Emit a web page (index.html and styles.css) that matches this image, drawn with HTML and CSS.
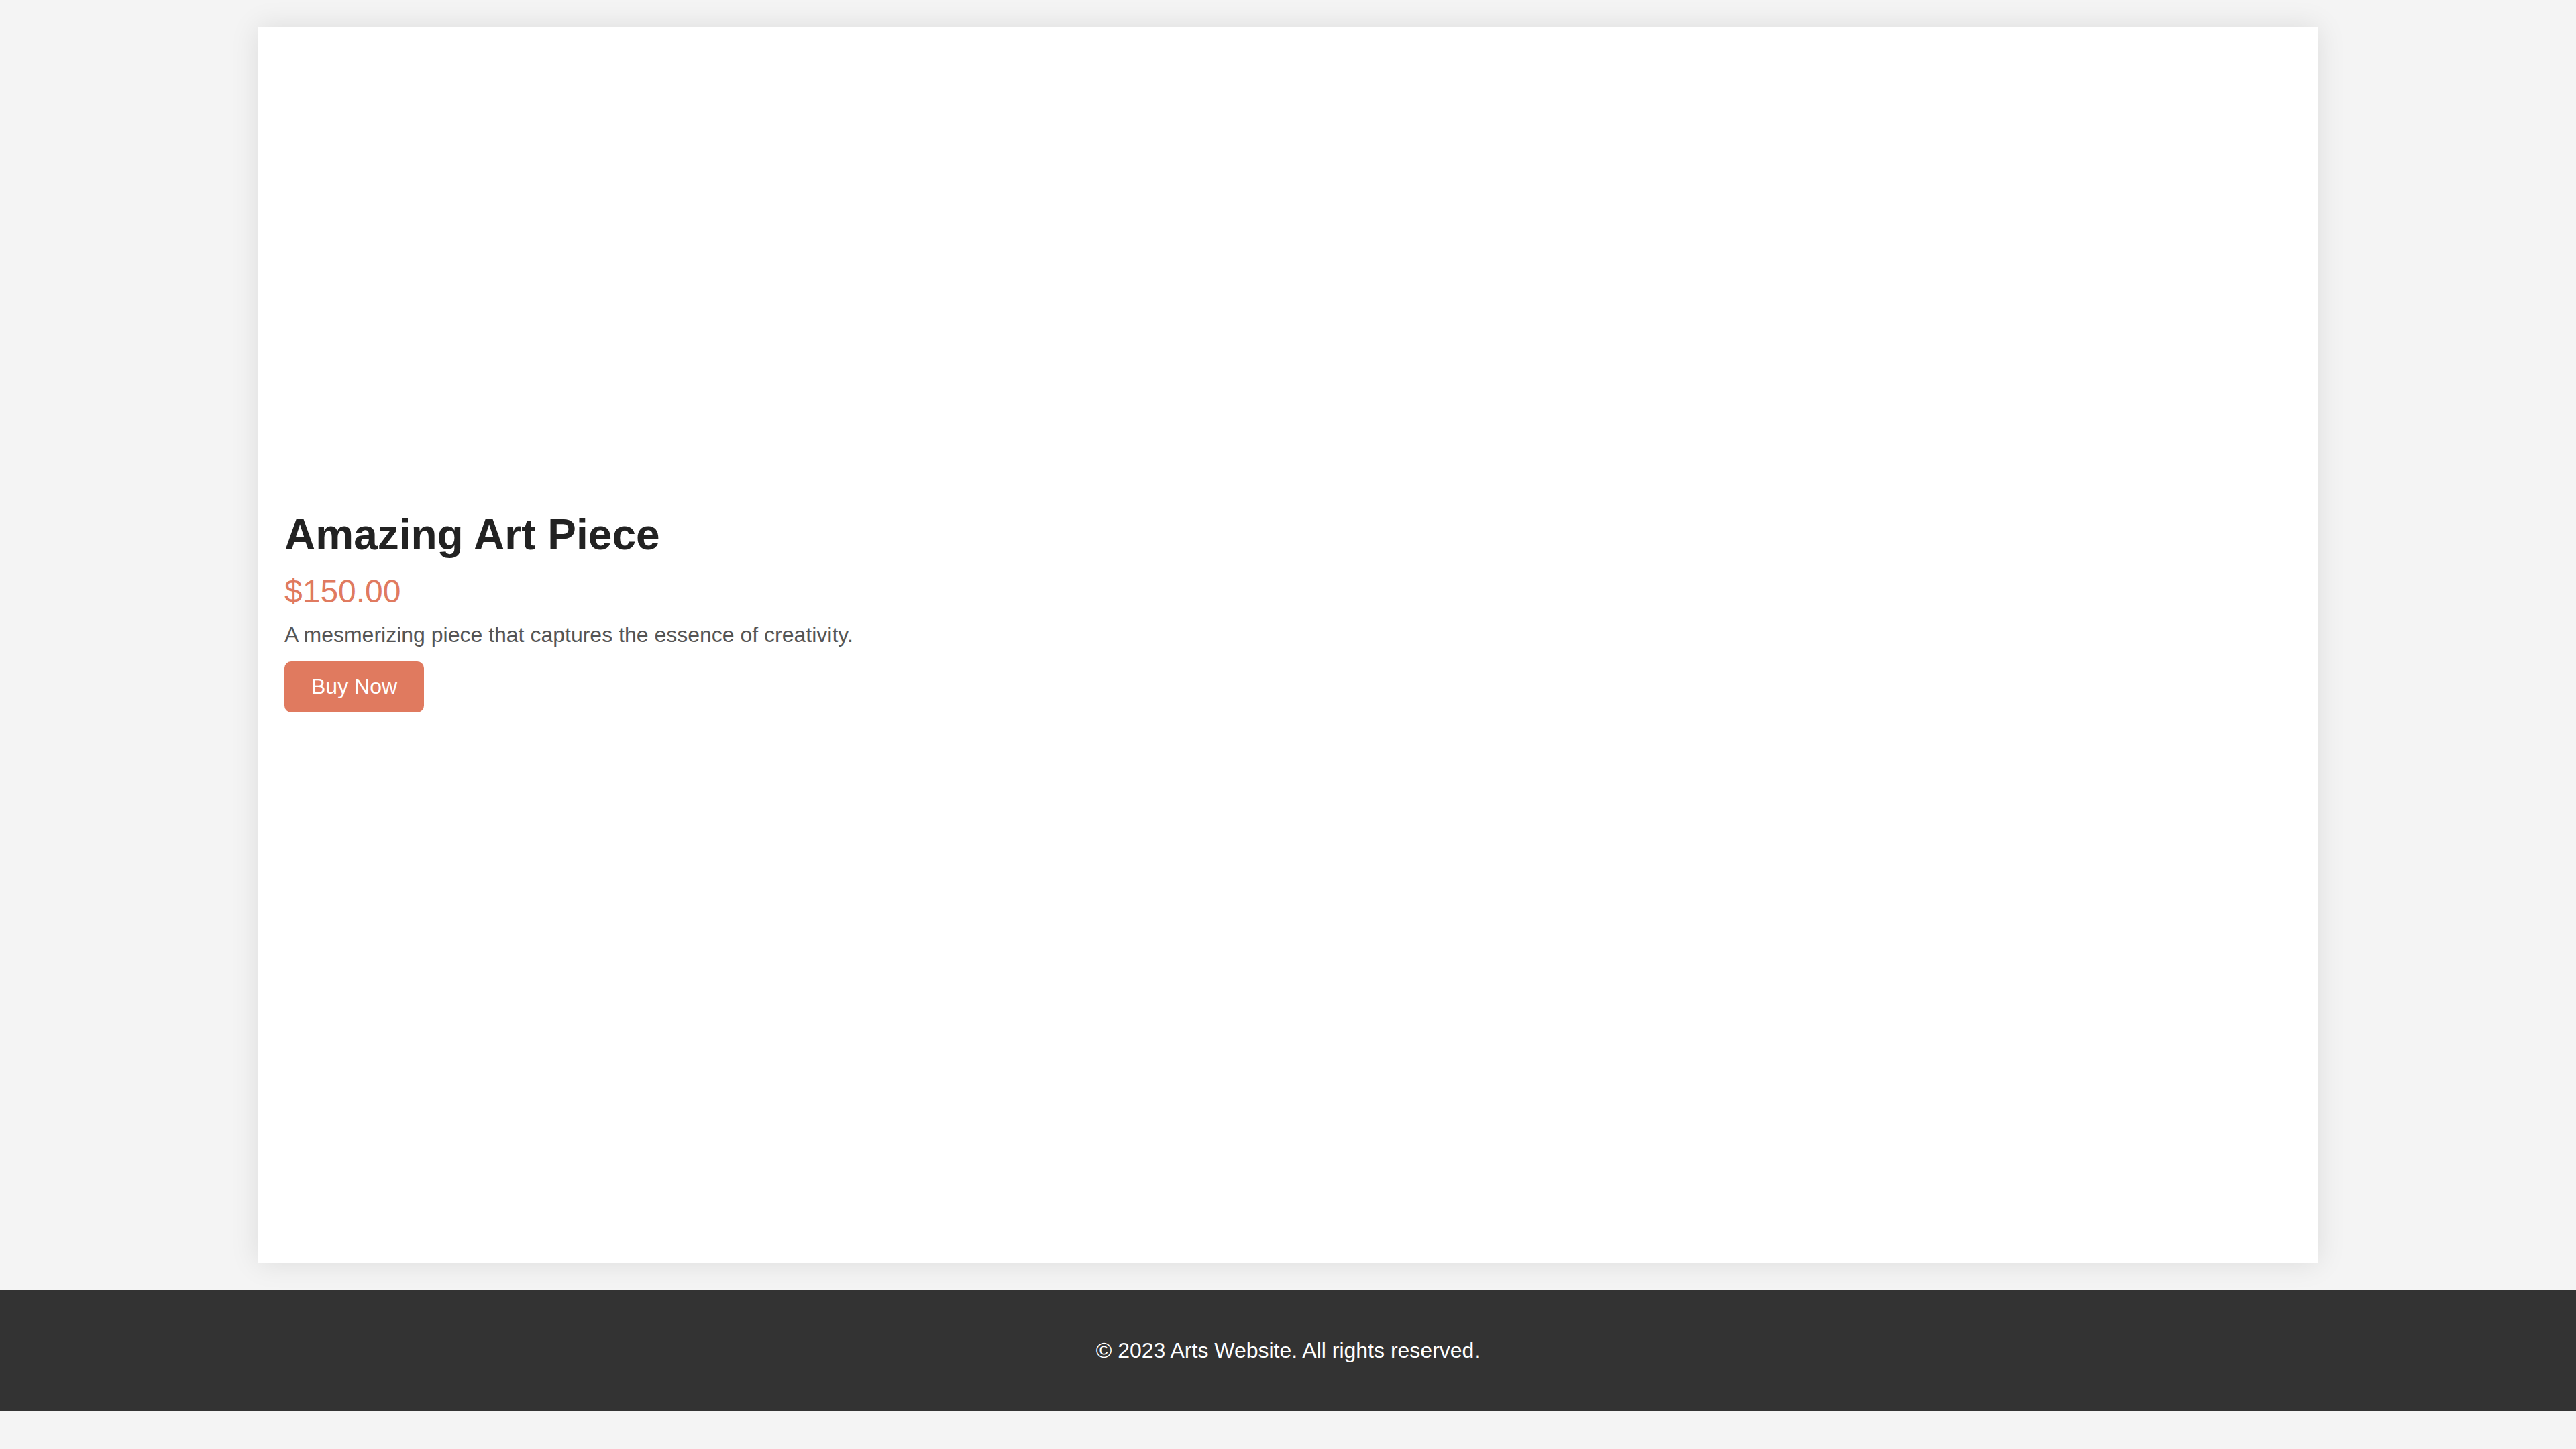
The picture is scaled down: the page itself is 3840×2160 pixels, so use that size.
FILE: index.html
```html
<!DOCTYPE html>
<html lang="en">
<head>
<meta charset="utf-8">
<title>Arts Website</title>
<link rel="stylesheet" href="styles.css">
</head>
<body>
<main class="container">
  <section class="art-piece">
    <div class="art-info">
      <h1 class="art-title">Amazing Art Piece</h1>
      <p class="art-price">$150.00</p>
      <p class="art-desc">A mesmerizing piece that captures the essence of creativity.</p>
      <button class="buy-btn">Buy Now</button>
    </div>
  </section>
</main>
<footer class="site-footer">
  <p>&copy; 2023 Arts Website. All rights reserved.</p>
</footer>
</body>
</html>
```

FILE: styles.css
```css
html, body {
  margin: 0;
  padding: 0;
}
body {
  background: #f4f4f4;
  font-family: "Liberation Sans", Arial, Helvetica, sans-serif;
  color: #333;
  min-height: 2160px;
}
.container {
  width: 80%;
  margin: 40px auto 40px;
  background: #fff;
  box-shadow: 0 0 40px rgba(0, 0, 0, 0.1);
  box-sizing: border-box;
  min-height: 1843px;
  padding: 720px 40px 40px;
}
.art-info {
  display: flex;
  flex-direction: column;
  align-items: flex-start;
}
.art-title {
  margin: 0;
  font-size: 64px;
  font-weight: bold;
  color: #222;
  line-height: normal;
}
.art-price {
  margin: 20px 0 0;
  font-size: 48px;
  color: #e07a5f;
  line-height: normal;
}
.art-desc {
  margin: 19px 0 0;
  font-size: 32px;
  color: #555;
  line-height: normal;
}
.buy-btn {
  margin-top: 21px;
  background: #e07a5f;
  color: #fff;
  border: none;
  border-radius: 10px;
  padding: 19px 40px 20px;
  font-family: "Liberation Sans", Arial, Helvetica, sans-serif;
  font-size: 32px;
  line-height: normal;
  cursor: pointer;
}
.site-footer {
  background: #333;
  color: #fff;
  text-align: center;
  padding: 40px 0;
}
.site-footer p {
  margin: 32px 0;
  font-size: 32px;
  line-height: normal;
}
```
